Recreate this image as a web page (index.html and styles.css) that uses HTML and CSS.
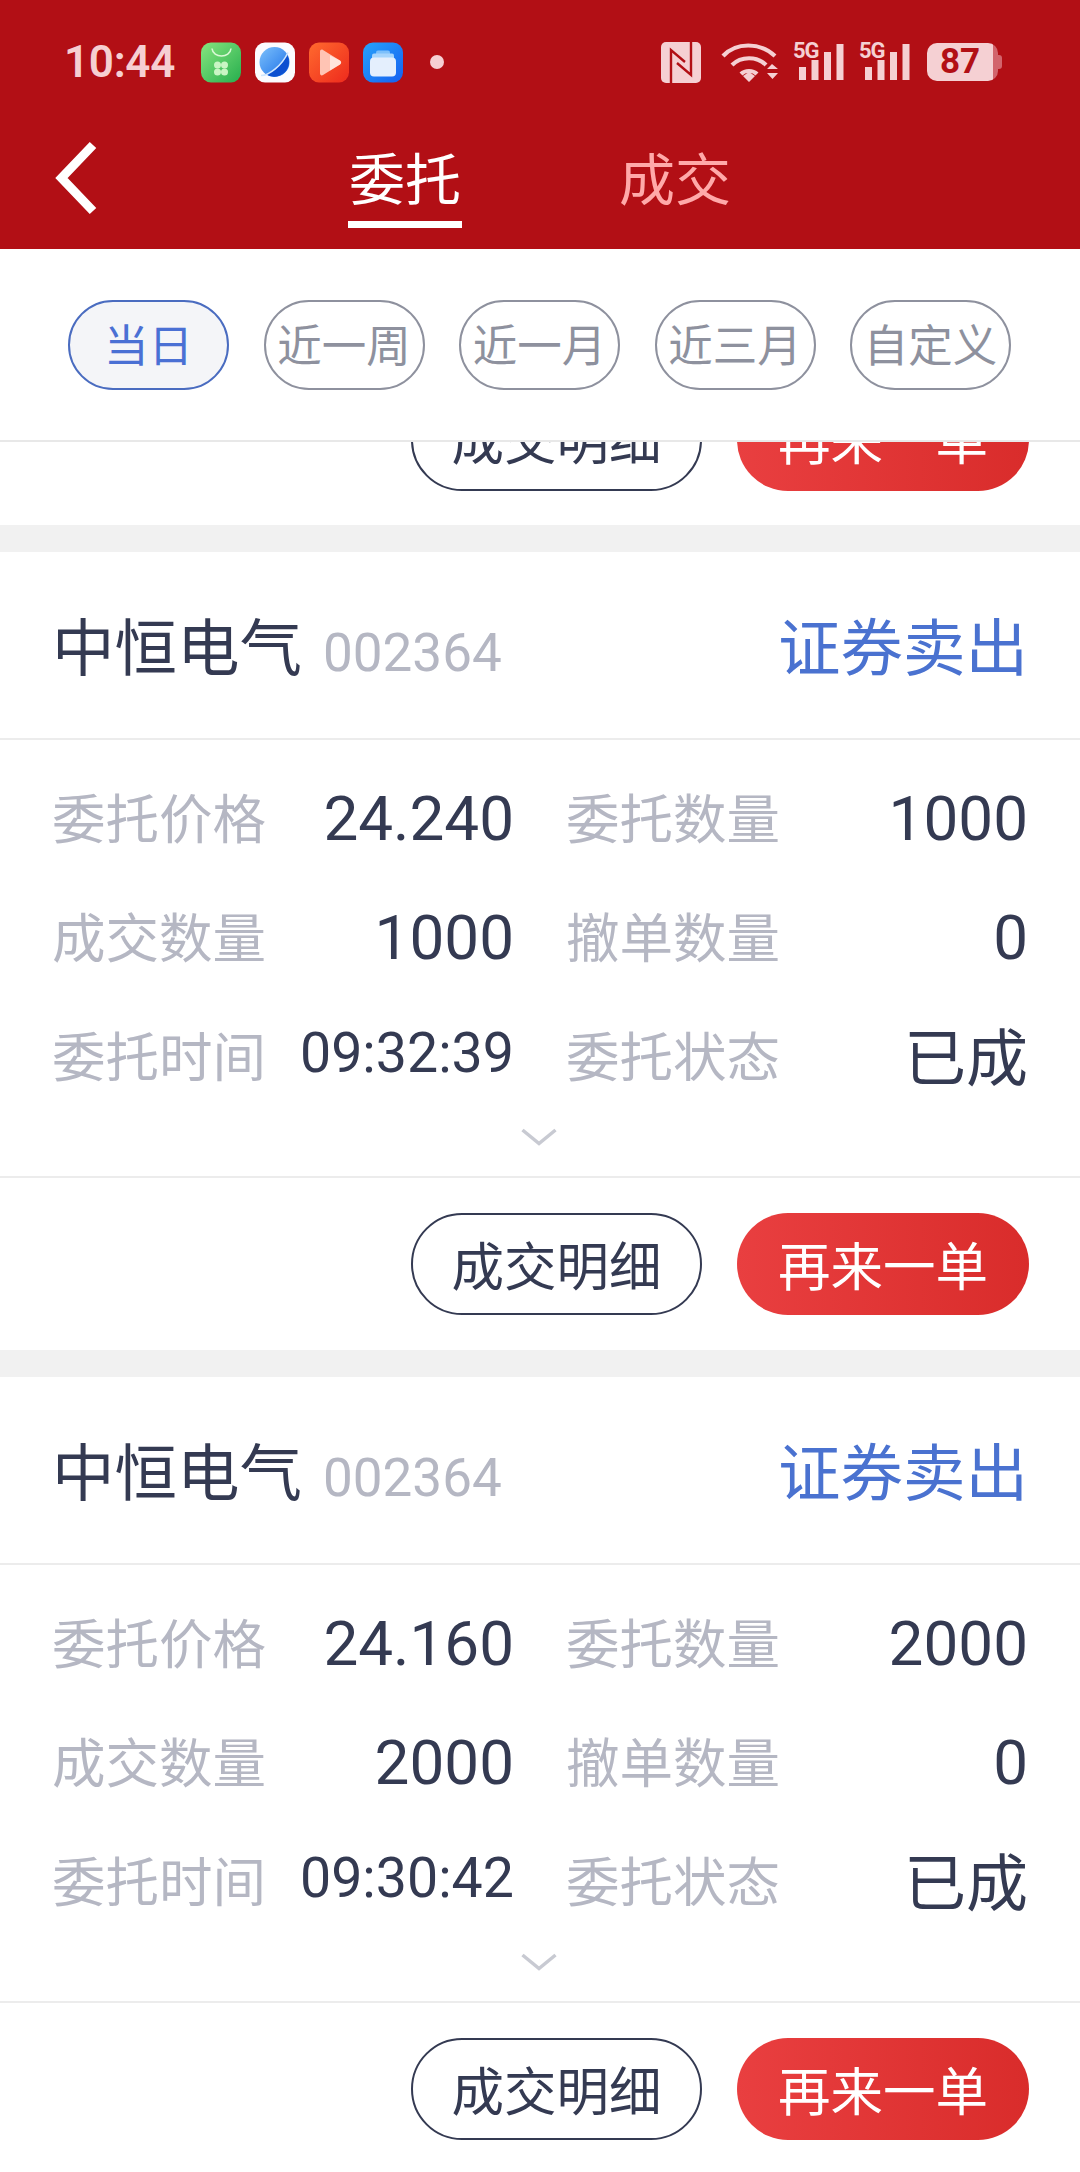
FILE: index.html
```html
<!DOCTYPE html>
<html lang="zh-CN">
<head>
  <meta charset="UTF-8">
  <meta name="viewport" content="width=device-width, initial-scale=1.0">
  <title>委托</title>
  <link rel="stylesheet" href="styles.css">
</head>
<body>
  <!-- Red header: status bar and tabs -->
  <header class="top">
    <div class="status">
      <span class="time">10:44</span>
      <div class="apps">
        <svg class="app" viewBox="0 0 40 40">
          <defs>
            <linearGradient id="g1" x1="0" y1="0" x2="1" y2="1"><stop offset="0" stop-color="#86e57f"/><stop offset="1" stop-color="#27ae4e"/></linearGradient>
            <linearGradient id="g2" x1="0" y1="0" x2="1" y2="1"><stop offset="0" stop-color="#7cc0fb"/><stop offset="1" stop-color="#1a6fe8"/></linearGradient>
            <linearGradient id="g3" x1="0" y1="0" x2="1" y2="1"><stop offset="0" stop-color="#ff6a2e"/><stop offset="1" stop-color="#ee2a1d"/></linearGradient>
            <linearGradient id="g4" x1="0" y1="0" x2="1" y2="1"><stop offset="0" stop-color="#27a2fb"/><stop offset="1" stop-color="#1560f0"/></linearGradient>
          </defs>
          <rect width="40" height="40" rx="10" fill="url(#g1)"/>
          <path d="M11 6c1 10 18 10 19 0" fill="none" stroke="#d9f8d5" stroke-width="1.6"/>
          <circle cx="16.5" cy="22.5" r="3.5" fill="#c9f5c4"/><circle cx="23.5" cy="22.5" r="3.5" fill="#c9f5c4"/>
          <circle cx="16.5" cy="29.5" r="3.5" fill="#c9f5c4"/><circle cx="23.5" cy="29.5" r="3.5" fill="#c9f5c4"/>
        </svg>
        <svg class="app" viewBox="0 0 40 40">
          <rect width="40" height="40" rx="10" fill="#fbfbfe"/>
          <circle cx="19.500" cy="19.500" r="15" fill="url(#g2)"/>
          <path d="M34 21a15 15 0 0 1-24 10c9-1 18-9 22-19a15 15 0 0 1 2 9z" fill="#0b4fd0"/>
          <path d="M6 33c8 0 21-10 27-23" fill="none" stroke="#cfe6fd" stroke-width="1.600"/>
        </svg>
        <svg class="app" viewBox="0 0 40 40">
          <rect width="40" height="40" rx="10" fill="url(#g3)"/>
          <path d="M11 9c0-1.500 1.500-2.500 3-1.500l17 10.500c1.500 1 1.500 3 0 4l-17 10.500c-1.500 1-3 0-3-1.500z" fill="#ffc4b4"/>
          <path d="M21 13l10 5c1.500 1 1.500 3 0 4l-10 6z" fill="#fff" opacity=".55"/>
        </svg>
        <svg class="app" viewBox="0 0 40 40">
          <rect width="40" height="40" rx="10" fill="url(#g4)"/>
          <rect x="13" y="8" width="14" height="6" rx="2" fill="#7cc0fb"/>
          <rect x="9" y="11" width="22" height="6" rx="2" fill="#a5d4fc"/>
          <rect x="7" y="15" width="26" height="19" rx="4" fill="#e4effd"/>
        </svg>
      </div>
      <span class="dot"></span>
      <div class="sys">
        <svg class="nfc" viewBox="0 0 40 41">
          <rect width="40" height="41" rx="5" fill="#f5d0d3"/>
          <path d="M10 41V8l14 12M30 0v33L16 21" fill="none" stroke="#b20f15" stroke-width="2.400"/>
        </svg>
        <svg class="wifi" viewBox="0 0 58 40">
          <g fill="none" stroke="#f5d0d3" stroke-width="4.200">
            <path d="M2 14C15 0 39 0 54 14"/>
            <path d="M11 23c9-9 25-9 34 0"/>
            <path d="M20 32c4-4 12-4 16 0"/>
          </g>
          <path d="M22 34l6-4 6 4-6 6zM46 27l5-5 6 5zM46 31h11l-5.500 6z" fill="#f5d0d3"/>
        </svg>
        <div class="signal">
          <span class="sig-text">5G</span>
          <svg class="bars" viewBox="0 0 52 40"><path d="M6 25h7v13H6zM18.500 18h7v20h-7zM31 10h7v28h-7zM43.500 2h7v36h-7z" fill="#f5d0d3"/></svg>
        </div>
        <div class="signal">
          <span class="sig-text">5G</span>
          <svg class="bars" viewBox="0 0 52 40"><path d="M6 25h7v13H6zM18.500 18h7v20h-7zM31 10h7v28h-7zM43.500 2h7v36h-7z" fill="#f5d0d3"/></svg>
        </div>
        <div class="battery">
          <span class="level">87</span>
          <span class="cap"></span>
        </div>
      </div>
    </div>
    <nav class="nav">
      <svg class="back" viewBox="0 0 42 70">
        <path d="M38 2L6.500 35 38 68" fill="none" stroke="#fff" stroke-width="9"/>
      </svg>
      <a class="tab active">委托</a>
      <a class="tab">成交</a>
    </nav>
  </header>

  <!-- Date filter -->
  <div class="filters">
    <span class="chip on">当日</span>
    <span class="chip">近一周</span>
    <span class="chip">近一月</span>
    <span class="chip">近三月</span>
    <span class="chip">自定义</span>
  </div>

  <!-- Order list, scrolled -->
  <main class="list">
    <div class="card-foot clipped">
      <button class="btn">成交明细</button>
      <button class="btn red">再来一单</button>
    </div>

    <section class="card">
      <div class="card-head">
        <span class="name">中恒电气</span>
        <span class="code">002364</span>
        <span class="side">证券卖出</span>
      </div>
      <div class="details">
        <div class="row"><span class="label">委托价格</span><span class="val">24.240</span></div>
        <div class="row"><span class="label">委托数量</span><span class="val">1000</span></div>
        <div class="row"><span class="label">成交数量</span><span class="val">1000</span></div>
        <div class="row"><span class="label">撤单数量</span><span class="val">0</span></div>
        <div class="row"><span class="label">委托时间</span><span class="val small">09:32:39</span></div>
        <div class="row"><span class="label">委托状态</span><span class="val word">已成</span></div>
      </div>
      <svg class="more" viewBox="0 0 36 18"><path d="M1.500 2L18 15.500 34.500 2" fill="none" stroke="#c8cad2" stroke-width="3.500"/></svg>
      <div class="card-foot">
        <button class="btn">成交明细</button>
        <button class="btn red">再来一单</button>
      </div>
    </section>

    <section class="card">
      <div class="card-head">
        <span class="name">中恒电气</span>
        <span class="code">002364</span>
        <span class="side">证券卖出</span>
      </div>
      <div class="details">
        <div class="row"><span class="label">委托价格</span><span class="val">24.160</span></div>
        <div class="row"><span class="label">委托数量</span><span class="val">2000</span></div>
        <div class="row"><span class="label">成交数量</span><span class="val">2000</span></div>
        <div class="row"><span class="label">撤单数量</span><span class="val">0</span></div>
        <div class="row"><span class="label">委托时间</span><span class="val small">09:30:42</span></div>
        <div class="row"><span class="label">委托状态</span><span class="val word">已成</span></div>
      </div>
      <svg class="more" viewBox="0 0 36 18"><path d="M1.500 2L18 15.500 34.500 2" fill="none" stroke="#c8cad2" stroke-width="3.500"/></svg>
      <div class="card-foot">
        <button class="btn">成交明细</button>
        <button class="btn red">再来一单</button>
      </div>
    </section>
  </main>
</body>
</html>
```

FILE: styles.css
```css
html,
body {
  margin: 0;
  padding: 0;
  width: 1080px;
  height: 2172px;
  overflow: hidden;
  background-color: #fff;
  font-family: Roboto, "Noto Sans CJK SC", sans-serif;
}

/* header */
.top {
  background-color: #b20f15;
  height: 249px;
}

.status {
  display: flex;
  align-items: center;
  height: 124px;
  padding-left: 64px;
}

.time {
  width: 137px;
  font-size: 44px;
  font-weight: 600;
  letter-spacing: -0.300px;
  color: #f6cfd2;
}

.apps {
  display: flex;
  gap: 14px;
}

.app {
  width: 40px;
  height: 41px;
}

.dot {
  width: 14px;
  height: 14px;
  margin-left: 27px;
  border-radius: 50%;
  background-color: #f6cfd2;
}

.sys {
  display: flex;
  align-items: center;
  margin-left: 217px;
}

.nfc {
  width: 40px;
  height: 41px;
}

.wifi {
  width: 58px;
  height: 40px;
  margin-left: 20px;
}

.signal {
  position: relative;
  width: 52px;
  height: 40px;
  margin-left: 14px;
}

.bars {
  display: block;
  width: 52px;
  height: 40px;
}

.sig-text {
  position: absolute;
  top: -3px;
  left: 0;
  font-size: 22px;
  line-height: 24px;
  font-weight: 700;
  letter-spacing: -1px;
  color: #f5d0d3;
}

.battery {
  display: flex;
  align-items: center;
  margin-left: 16px;
}

.level {
  width: 71px;
  height: 38px;
  border-radius: 10px;
  background: linear-gradient(90deg, #f5d0d3 93%, #d2646c 93%);
  color: #b20f15;
  font-size: 35px;
  font-weight: 700;
  line-height: 38px;
  text-align: center;
  padding-right: 5px;
  box-sizing: border-box;
}

.cap {
  width: 4px;
  height: 14px;
  border-radius: 0 3px 3px 0;
  background-color: #d2646c;
}

.nav {
  display: flex;
  align-items: flex-start;
  padding-left: 55px;
}

.back {
  width: 42px;
  height: 70px;
  margin-top: 19px;
  overflow: visible;
}

.tab {
  width: 114px;
  height: 70px;
  margin-top: 21px;
  padding-bottom: 6px;
  font-size: 56px;
  line-height: 72px;
  text-align: center;
  color: #ffa9a9;
}

.tab.active {
  margin-left: 251px;
  margin-right: 156px;
  color: #fff;
  border-bottom: 7px solid #fff;
}

/* filter chips */
.filters {
  display: flex;
  gap: 34.500px;
  height: 140px;
  padding: 51px 0 0 68px;
  border-bottom: 2px solid #e8e8e8;
}

.chip {
  width: 161px;
  height: 90px;
  box-sizing: border-box;
  border: 2px solid #8e919e;
  border-radius: 45px;
  font-size: 44.500px;
  line-height: 90px;
  text-align: center;
  white-space: nowrap;
  color: #8e919e;
}

.chip.on {
  border-color: #4a6cc0;
  background-color: #f4f5f8;
  color: #4a70d4;
}

/* order cards */
.card {
  border-top: 27px solid #f1f1f1;
}

.card-head {
  display: flex;
  align-items: baseline;
  height: 188px;
  padding: 7px 52px 0;
  box-sizing: border-box;
  line-height: 181px;
  border-bottom: 2px solid #ececec;
}

.name {
  font-size: 62.500px;
  color: #343a52;
}

.code {
  margin-left: 21px;
  font-size: 53px;
  color: #b5b7c3;
}

.side {
  margin-left: auto;
  font-size: 62.500px;
  color: #4a72d0;
}

.details {
  display: grid;
  grid-template-columns: 462px 462px;
  column-gap: 52px;
  grid-auto-rows: 119px;
  padding: 19px 52px 0;
}

.row {
  display: flex;
  justify-content: space-between;
  align-items: center;
}

.label {
  padding-bottom: 6px;
  font-size: 53.500px;
  color: #b5b7c3;
}

.val {
  font-size: 62px;
  color: #343a52;
}

.val.small {
  padding-bottom: 6px;
  font-size: 55.500px;
}

.val.word {
  padding-bottom: 6px;
}

.more {
  display: block;
  width: 36px;
  height: 18px;
  margin: 12px 0 0 521px;
}

.card-foot {
  display: flex;
  justify-content: flex-end;
  gap: 35px;
  margin-top: 30px;
  padding: 35px 51px 35px 0;
  border-top: 2px solid #ececec;
}

.card-foot.clipped {
  align-items: flex-end;
  height: 83px;
  margin-top: 0;
  padding-top: 0;
  padding-bottom: 34px;
  border-top: 0;
  box-sizing: border-box;
  overflow: hidden;
}

.btn {
  flex-shrink: 0;
  width: 291px;
  height: 102px;
  padding: 0 0 2px;
  box-sizing: border-box;
  border: 2px solid #343a52;
  border-radius: 51px;
  background: #fff;
  font-family: inherit;
  font-size: 52.500px;
  color: #343a52;
}

.clipped .btn {
  padding-bottom: 7px;
}

.btn.red {
  width: 292px;
  border: 0;
  background: linear-gradient(90deg, #e93f40, #d92c2b);
  color: #fff;
}
```
